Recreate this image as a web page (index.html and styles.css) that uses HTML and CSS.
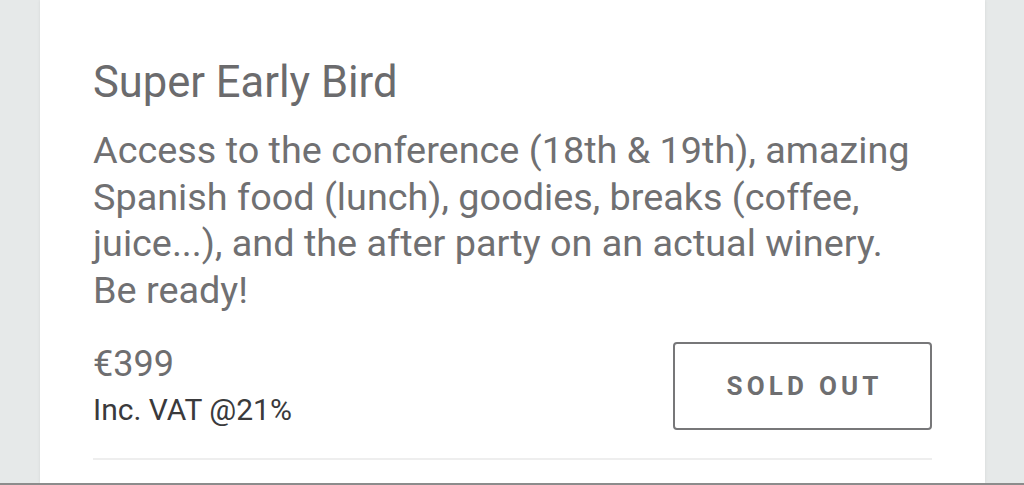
FILE: index.html
```html
<!DOCTYPE html>
<html lang="en">
<head>
<meta charset="utf-8">
<title>Tickets</title>
<link rel="stylesheet" href="styles.css">
</head>
<body>
<div class="page">
  <main class="card">
    <section class="ticket">
      <h2 class="ticket-title">Super Early Bird</h2>
      <p class="ticket-desc">Access to the conference (18th &amp; 19th), amazing Spanish food (lunch), goodies, breaks (coffee, juice...), and the after party on an actual winery. Be ready!</p>
      <div class="ticket-footer">
        <div class="price">
          <div class="price-amount">€399</div>
          <div class="price-vat">Inc. VAT @21%</div>
        </div>
        <button class="sold-out" type="button">SOLD OUT</button>
      </div>
      <hr class="divider">
    </section>
  </main>
  <div class="bottom-line"></div>
</div>
</body>
</html>
```
FILE: styles.css
```css
html, body {
  margin: 0;
  padding: 0;
  height: 100%;
}
body {
  background: #e6e9e9;
  font-family: Roboto, "Liberation Sans", sans-serif;
  overflow: hidden;
}
.page {
  display: flex;
  flex-direction: column;
  height: 485px;
}
.card {
  flex: 1;
  margin: 0 39px 0 40px;
  background: #ffffff;
  box-shadow: 0 0 3px rgba(0, 0, 0, 0.08);
  padding: 0 53px;
  overflow: hidden;
}
.ticket {
  padding-top: 58px;
}
.ticket-title {
  margin: 0;
  font-size: 43.5px;
  font-weight: 400;
  line-height: 50px;
  color: #6b6b6d;
}
.ticket-desc {
  margin: 19px 0 0;
  font-size: 37.8px;
  line-height: 46.5px;
  color: #707072;
}
.ticket-footer {
  display: flex;
  justify-content: space-between;
  align-items: flex-start;
  margin-top: 29px;
}
.price {
  padding-top: 2px;
}
.price-amount {
  font-size: 36px;
  line-height: 40px;
  color: #6e6e70;
}
.price-vat {
  margin-top: 9px;
  font-size: 30px;
  line-height: 34px;
  color: #3a3a3c;
}
.sold-out {
  width: 259px;
  height: 88px;
  border: 2px solid #777779;
  border-radius: 4px;
  background: #ffffff;
  font-family: Roboto, "Liberation Sans", sans-serif;
  font-size: 26px;
  font-weight: 700;
  letter-spacing: 4.2px;
  color: #6e6e70;
  padding: 0 0 0 4.2px;
}
.divider {
  margin: 28px 0 0;
  border: 0;
  height: 2px;
  background: #eeeeee;
}
.bottom-line {
  height: 2px;
  background: #8c8c8c;
}
```
